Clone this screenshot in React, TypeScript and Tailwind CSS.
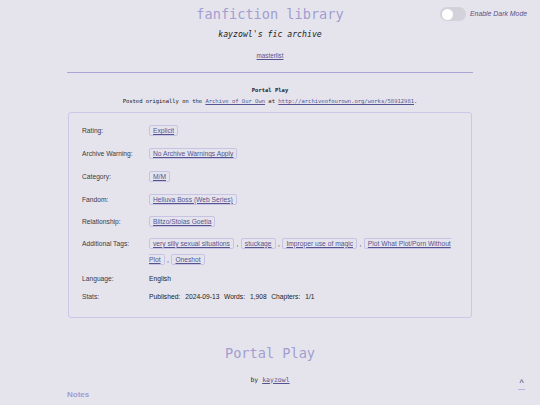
import React from "react";

const mono = "font-['DejaVu_Sans_Mono',monospace]";
const sans = "font-['Liberation_Sans',Arial,sans-serif]";

const Tag = ({ children }: { children: React.ReactNode }) => (
  <a className="border border-[#c6c3e4] rounded-[2px] px-[3px] py-px text-[#56548f] underline decoration-[0.5px] underline-offset-[1px]">
    {children}
  </a>
);

const Row = ({
  label,
  children,
  h = "h-[22.75px]",
}: {
  label: string;
  children: React.ReactNode;
  h?: string;
}) => (
  <div className={`flex items-center ${h}`}>
    <div className="w-[67px] shrink-0 text-[#3a3a44]">{label}</div>
    <div className="flex-1">{children}</div>
  </div>
);

const Comma = () => <span className="ml-[2.5px] mr-[2.5px]">,</span>;

export default function App() {
  const stats = [
    ["Published:", "2024-09-13"],
    ["Words:", "1,908"],
    ["Chapters:", "1/1"],
  ];

  return (
    <div className="relative min-h-[405px] bg-[#e5e4ed] pb-4">
      {/* dark mode toggle */}
      <div className="absolute top-[7px] left-[440px] flex items-center gap-[4px]">
        <div className="w-[26px] h-[14px] rounded-full bg-[#d3d2da] flex items-center px-[1.5px]">
          <div className="w-[11px] h-[11px] rounded-full bg-white" />
        </div>
        <span className={`${sans} italic text-[6.9px] text-[#55528a]`}>Enable Dark Mode</span>
      </div>

      {/* header */}
      <div className={`${mono} text-center`}>
        <div className="h-[28px] leading-[28px] text-[13.6px] text-[#a19ed0]">fanfiction library</div>
        <div className="h-[12px] leading-[12px] text-[8.2px] italic text-[#1c1c22]">kayzowl's fic archive</div>
        <div className="mt-[6px] h-[14px] leading-[14px]">
          <a className={`${sans} text-[6.3px] text-[#56548f] underline`}>masterlist</a>
        </div>
      </div>

      <div className="w-[406px] mx-auto">
        <div className="mt-[12px] h-px bg-[#aaa7d6]" />

        <div className={`${mono} text-center text-[5.5px] text-[#222]`}>
          <div className="mt-[12px] h-[10px] leading-[10px] font-bold">Portal Play</div>
          <div className="mt-[1px] h-[10px] leading-[10px]">
            Posted originally on the{" "}
            <a className="text-[#56548f] underline">Archive of Our Own</a> at{" "}
            <a className="text-[#56548f] underline">http://archiveofourown.org/works/58912981</a>.
          </div>
        </div>

        {/* work meta */}
        <div
          className={`${sans} mt-[6px] mx-px border border-[#cac7e8] rounded-[3px] pl-[13px] pr-[13px] pt-[7px] pb-[11px] text-[6.7px]`}
        >
          <Row label="Rating:">
            <Tag>Explicit</Tag>
          </Row>
          <Row label="Archive Warning:">
            <Tag>No Archive Warnings Apply</Tag>
          </Row>
          <Row label="Category:">
            <Tag>M/M</Tag>
          </Row>
          <Row label="Fandom:">
            <Tag>Helluva Boss (Web Series)</Tag>
          </Row>
          <Row label="Relationship:">
            <Tag>Blitzo/Stolas Goetia</Tag>
          </Row>
          <div className="flex items-start pt-[2px] leading-[16px]">
            <div className="w-[67px] shrink-0 text-[#3a3a44]">Additional Tags:</div>
            <div className="flex-1 text-[#3a3a44]">
              <Tag>very silly sexual situations</Tag>
              <Comma />
              <Tag>stuckage</Tag>
              <Comma />
              <Tag>Improper use of magic</Tag>
              <Comma />
              <Tag>Plot What Plot/Porn Without Plot</Tag>
              <Comma />
              <Tag>Oneshot</Tag>
            </div>
          </div>
          <div className="mt-[2px]" />
          <Row label="Language:" h="h-[18px]">
            <span className="text-[#222]">English</span>
          </Row>
          <Row label="Stats:" h="h-[18px]">
            <div className="flex text-[#222]">
              {stats.map(([k, v]) => (
                <span key={k} className="mr-[4.5px]">
                  <span className="mr-[5px]">{k}</span>
                  {v}
                </span>
              ))}
            </div>
          </Row>
        </div>

        {/* chapter heading */}
        <div className={`${mono} text-center`}>
          <div className="mt-[25px] h-[20px] leading-[20px] text-[13.6px] text-[#a19ed0]">Portal Play</div>
          <div className="mt-[12px] h-[10px] leading-[10px] text-[6.5px] text-[#333]">
            by <a className="text-[#56548f] underline">kayzowl</a>
          </div>
        </div>
        <div className={`${sans} mt-[5px] h-[10px] leading-[10px] text-[8px] font-bold text-[#a19ed0]`}>Notes</div>
      </div>

      {/* back to top */}
      <a className={`${sans} absolute left-[518px] top-[378px] w-[7px] text-center text-[9px] leading-[11px] text-[#4a4880] border-b border-[#b8b5dc]`}>
        ^
      </a>
    </div>
  );
}
